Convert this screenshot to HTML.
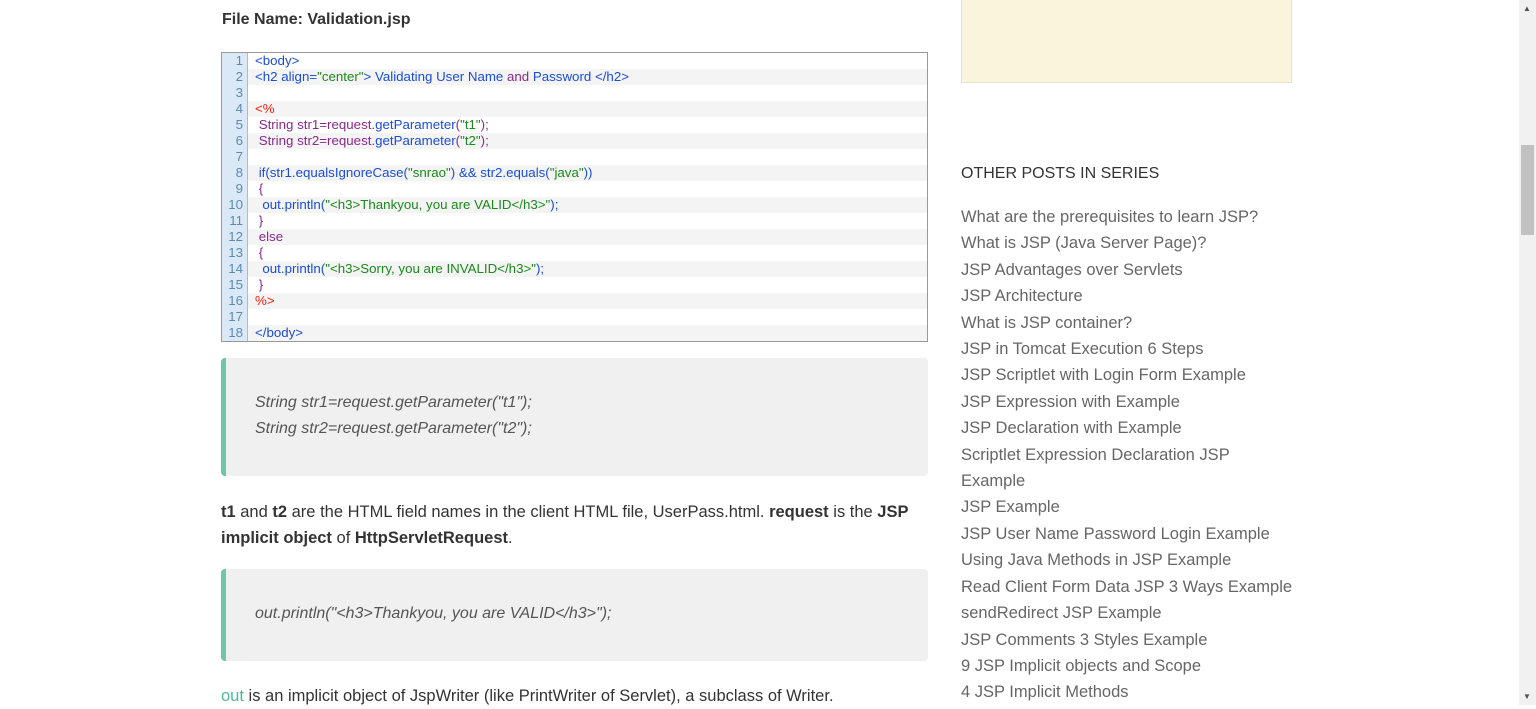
<!DOCTYPE html>
<html><head><style>
body{margin:0;width:1536px;height:705px;overflow:hidden;background:#fff;font-family:"Liberation Sans",sans-serif;position:relative}
.abs{position:absolute}
h4{position:absolute;left:222px;top:11px;margin:0;font-size:16px;font-weight:bold;color:#333}
.code{left:221px;top:52px;width:705px;height:288px;border:1px solid #999;background:#fff;font-family:"Liberation Sans",sans-serif;font-size:13.3px}
.row{height:16px;line-height:16px;white-space:pre;position:relative}
.row.e{background:#f4f4f4}
.ln{display:inline-block;width:26px;text-align:right;color:#5a8ab8;background:#dbe8f6;margin-right:7px;box-sizing:border-box;padding-right:4px;border-right:1px solid #9cc0e4}
.b{color:#1a4dd8}.g{color:#1a8a1a}.p{color:#8a2a8a}.r{color:#e21}
.bq{left:221px;width:707px;background:#f0f0f0;border-left:5px solid #6cc7a8;border-radius:4px;box-sizing:border-box;padding-left:29px;font-style:italic;font-size:16px;color:#555;line-height:26px}
.txt{left:221px;font-size:16.5px;color:#333;line-height:26px;width:705px}
.side{left:961px;font-size:16.5px;color:#666;line-height:26.4px}
</style></head><body>
<h4>File Name: Validation.jsp</h4>
<div class="abs code">
<div class="row"><span class="ln">1</span><span class="b">&lt;body&gt;</span></div>
<div class="row e"><span class="ln">2</span><span class="b">&lt;h2 align=</span><span class="g">"center"</span><span class="b">&gt; Validating User Name </span><span class="p">and</span><span class="b"> Password &lt;/h2&gt;</span></div>
<div class="row"><span class="ln">3</span></div>
<div class="row e"><span class="ln">4</span><span class="r">&lt;%</span></div>
<div class="row"><span class="ln">5</span><span class="p"> String str1=request.</span><span class="b">getParameter</span><span class="p">(</span><span class="g">"t1"</span><span class="p">);</span></div>
<div class="row e"><span class="ln">6</span><span class="p"> String str2=request.</span><span class="b">getParameter</span><span class="p">(</span><span class="g">"t2"</span><span class="p">);</span></div>
<div class="row"><span class="ln">7</span></div>
<div class="row e"><span class="ln">8</span><span class="b"> if(str1.equalsIgnoreCase(</span><span class="g">"snrao"</span><span class="b">) &amp;&amp; str2.equals(</span><span class="g">"java"</span><span class="b">))</span></div>
<div class="row"><span class="ln">9</span><span class="p"> {</span></div>
<div class="row e"><span class="ln">10</span><span class="b">  out.println(</span><span class="g">"&lt;h3&gt;Thankyou, you are VALID&lt;/h3&gt;"</span><span class="b">);</span></div>
<div class="row"><span class="ln">11</span><span class="p"> }</span></div>
<div class="row e"><span class="ln">12</span><span class="p"> else</span></div>
<div class="row"><span class="ln">13</span><span class="p"> {</span></div>
<div class="row e"><span class="ln">14</span><span class="b">  out.println(</span><span class="g">"&lt;h3&gt;Sorry, you are INVALID&lt;/h3&gt;"</span><span class="b">);</span></div>
<div class="row"><span class="ln">15</span><span class="p"> }</span></div>
<div class="row e"><span class="ln">16</span><span class="r">%&gt;</span></div>
<div class="row"><span class="ln">17</span></div>
<div class="row e"><span class="ln">18</span><span class="b">&lt;/body&gt;</span></div>
</div>
<div class="abs bq" style="top:358px;height:118px;padding-top:32px">String str1=request.getParameter("t1");<br>String str2=request.getParameter("t2");</div>
<div class="abs txt" style="top:499px"><b>t1</b> and <b>t2</b> are the HTML field names in the client HTML file, UserPass.html. <b>request</b> is the <b>JSP implicit object</b> of <b>HttpServletRequest</b>.</div>
<div class="abs bq" style="top:569px;height:92px;padding-top:32px">out.println("&lt;h3&gt;Thankyou, you are VALID&lt;/h3&gt;");</div>
<div class="abs txt" style="top:683px"><span style="color:#4bb89a">out</span> is an implicit object of JspWriter (like PrintWriter of Servlet), a subclass of Writer.</div>
<div class="abs" style="left:961px;top:0;width:329px;height:82px;background:#f8f5dc;border:1px solid #e6e3cc;border-top:none"></div>
<div class="abs" style="left:961px;top:165px;font-size:16px;color:#333">OTHER POSTS IN SERIES</div>
<div class="abs side" style="top:204px">What are the prerequisites to learn JSP?<br>What is JSP (Java Server Page)?<br>JSP Advantages over Servlets<br>JSP Architecture<br>What is JSP container?<br>JSP in Tomcat Execution 6 Steps<br>JSP Scriptlet with Login Form Example<br>JSP Expression with Example<br>JSP Declaration with Example<br>Scriptlet Expression Declaration JSP<br>Example<br>JSP Example<br>JSP User Name Password Login Example<br>Using Java Methods in JSP Example<br>Read Client Form Data JSP 3 Ways Example<br>sendRedirect JSP Example<br>JSP Comments 3 Styles Example<br>9 JSP Implicit objects and Scope<br>4 JSP Implicit Methods</div>
<div class="abs" style="left:1519px;top:0;width:17px;height:705px;background:#f1f1f1"></div>
<div class="abs" style="left:1521px;top:145px;width:13px;height:90px;background:#c1c1c1"></div>
<div class="abs" style="left:1523px;top:4px;font-size:8px;color:#505050">▲</div>
<div class="abs" style="left:1523px;top:692px;font-size:8px;color:#505050">▼</div>
</body></html>
